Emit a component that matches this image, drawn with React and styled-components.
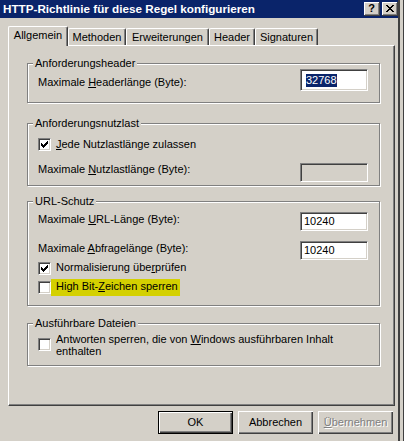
import React from "react"
import styled, { createGlobalStyle } from "styled-components"

const GlobalStyle = createGlobalStyle`
  html, body {
    margin: 0;
    padding: 0;
    background: #d4d0c8;
  }
  body {
    font-family: "Liberation Sans", Arial, sans-serif;
    font-size: 11px;
    color: #000;
  }
  * {
    box-sizing: border-box;
  }
`

const Screen = styled.div`
  display: flex;
  width: 404px;
  height: 441px;
  overflow: hidden;
`

const Window = styled.div`
  width: 400px;
  height: 441px;
  flex: none;
  display: flex;
  flex-direction: column;
  background: #d4d0c8;
  border-right: 2px solid #404040;
`

const Backdrop = styled.div`
  flex: 1;
  background: #d4d0c8;
  border-right: 1px solid #404040;
`

const TitleBar = styled.div`
  height: 18px;
  flex: none;
  display: flex;
  align-items: flex-start;
  background: #0a246a;
  padding: 0 0 0 3px;
`

const Title = styled.div`
  flex: 1;
  color: #fff;
  font-weight: bold;
  font-size: 11.7px;
  line-height: 18px;
  white-space: nowrap;
`

const CaptionButtons = styled.div`
  display: flex;
  gap: 2px;
  margin-top: 2px;
`

const CaptionButton = styled.div`
  width: 16px;
  height: 14px;
  background: #d4d0c8;
  box-shadow: inset -1px -1px #404040, inset 1px 1px #fff,
    inset -2px -2px #808080;
  display: flex;
  align-items: center;
  justify-content: center;
  font-weight: bold;
  font-size: 11px;
  line-height: 1;
  padding: 0 1px 1px 0;
`

const TabRow = styled.div`
  display: flex;
  align-items: flex-end;
  height: 19px;
  margin: 8px 0 0 8px;
  flex: none;
`

const Tab = styled.div`
  position: relative;
  z-index: ${p => (p.$active ? 1 : 0)};
  width: ${p => p.$w}px;
  height: ${p => (p.$active ? 20 : 17)}px;
  margin-bottom: ${p => (p.$active ? -1 : 0)}px;
  background: #d4d0c8;
  border-left: 1px solid #fff;
  border-top: 1px solid #fff;
  border-right: 1px solid #404040;
  box-shadow: inset -1px 0 #808080;
  border-radius: 2px 2px 0 0;
  padding-top: 2px;
  text-align: center;
  line-height: 13px;
  white-space: nowrap;
`

const Panel = styled.div`
  margin-left: 8px;
  width: 387px;
  height: 361px;
  flex: none;
  border-top: 1px solid #fff;
  border-left: 1px solid #fff;
  border-right: 1px solid #404040;
  border-bottom: 1px solid #404040;
  box-shadow: inset -1px -1px #808080;
  padding: 17px 14px 0 18px;
  display: flex;
  flex-direction: column;
`

const Group = styled.div`
  height: ${p => p.$h}px;
  margin-top: ${p => p.$mt || 0}px;
  flex: none;
  border: 1px solid #808080;
  box-shadow: inset 1px 1px #fff, 1px 1px #fff;
  padding: 0 11px 0 10px;
  display: flex;
  flex-direction: column;
`

const Legend = styled.div`
  align-self: flex-start;
  height: 13px;
  margin: -7px 0 -6px -5px;
  padding: 0 2px;
  background: #d4d0c8;
  line-height: 13px;
  white-space: nowrap;
`

const FieldRow = styled.div`
  display: flex;
  justify-content: space-between;
  align-items: flex-start;
  margin-top: ${p => p.$mt}px;
`

const CheckRow = styled.div`
  display: flex;
  align-items: flex-start;
  margin-top: ${p => p.$mt}px;
`

const Label = styled.div`
  margin-top: ${p => p.$dy || 0}px;
  line-height: ${p => p.$lh || 13}px;
  white-space: nowrap;
`

const CheckLabel = styled(Label)`
  margin-left: ${p => (p.$marked ? 0 : 5)}px;
  padding: ${p => (p.$marked ? "1px 2px 3px 5px" : "0")};
  background: ${p => (p.$marked ? "#d4d000" : "transparent")};
`

const TextBox = styled.div`
  width: 68px;
  height: ${p => p.$h}px;
  flex: none;
  background: ${p => (p.$disabled ? "#d4d0c8" : "#fff")};
  border: 1px solid;
  border-color: #808080 #fff #fff #808080;
  box-shadow: inset 1px 1px #404040, inset -1px -1px #d4d0c8;
  padding-left: 3px;
  display: flex;
  align-items: center;
  line-height: 13px;
`

const Selection = styled.span`
  margin-left: 2px;
  background: #0a246a;
  color: #fff;
  line-height: 13px;
`

const Box = styled.div`
  width: 13px;
  height: 13px;
  flex: none;
  margin-top: ${p => p.$dy || 0}px;
  background: #fff;
  border: 1px solid;
  border-color: #808080 #fff #fff #808080;
  box-shadow: inset 1px 1px #404040, inset -1px -1px #d4d0c8;

  svg {
    display: block;
  }
`

const ButtonRow = styled.div`
  display: flex;
  justify-content: flex-end;
  gap: 5px;
  margin-top: 5px;
  padding-right: 5px;
`

const Button = styled.div`
  width: 75px;
  height: 23px;
  display: flex;
  align-items: center;
  justify-content: center;
  background: #d4d0c8;
  border: ${p => (p.$default ? "1px solid #000" : "none")};
  box-shadow: inset 1px 1px #fff, inset -1px -1px #404040,
    inset -2px -2px #808080;
  color: ${p => (p.$disabled ? "#808080" : "#000")};
  text-shadow: ${p => (p.$disabled ? "1px 1px 0 #fff" : "none")};
  line-height: 13px;
`

const CheckBox = ({ checked, dy }) => (
  <Box $dy={dy}>
    {checked && (
      <svg width="11" height="11" viewBox="0 0 11 11" shapeRendering="crispEdges">
        <path
          d="M2 4h1v3h-1z M3 5h1v3h-1z M4 6h1v3h-1z M5 5h1v3h-1z M6 4h1v3h-1z M7 3h1v3h-1z M8 2h1v3h-1z"
          fill="#000"
        />
      </svg>
    )}
  </Box>
)

const CloseGlyph = () => (
  <svg width="8" height="7" viewBox="0 0 8 7" shapeRendering="crispEdges">
    <path
      d="M0 0h2v1h-2z M1 1h2v1h-2z M2 2h4v1h-4z M3 3h2v1h-2z M2 4h4v1h-4z M1 5h2v1h-2z M0 6h2v1h-2z M6 0h2v1h-2z M5 1h2v1h-2z M5 5h2v1h-2z M6 6h2v1h-2z"
      fill="#000"
    />
  </svg>
)

const tabs = [
  { label: "Allgemein", w: 60, active: true },
  { label: "Methoden", w: 58 },
  { label: "Erweiterungen", w: 83 },
  { label: "Header", w: 46 },
  { label: "Signaturen", w: 63 },
]

export default function App() {
  return (
    <>
      <GlobalStyle />
      <Screen>
        <Window>
          <TitleBar>
            <Title>HTTP-Richtlinie für diese Regel konfigurieren</Title>
            <CaptionButtons>
              <CaptionButton>?</CaptionButton>
              <CaptionButton>
                <CloseGlyph />
              </CaptionButton>
            </CaptionButtons>
          </TitleBar>

          <TabRow>
            {tabs.map(t => (
              <Tab key={t.label} $w={t.w} $active={t.active}>
                {t.label}
              </Tab>
            ))}
          </TabRow>

          <Panel>
            <Group $h={40}>
              <Legend>Anforderungsheader</Legend>
              <FieldRow $mt={5}>
                <Label $dy={7}>
                  Maximale <u>H</u>eaderlänge (Byte):
                </Label>
                <TextBox $h={22}>
                  <Selection>32768</Selection>
                </TextBox>
              </FieldRow>
            </Group>

            <Group $h={63} $mt={20}>
              <Legend>Anforderungsnutzlast</Legend>
              <CheckRow $mt={14}>
                <CheckBox checked />
                <CheckLabel>
                  <u>J</u>ede Nutzlastlänge zulassen
                </CheckLabel>
              </CheckRow>
              <FieldRow $mt={12}>
                <Label>
                  Maximale <u>N</u>utzlastlänge (Byte):
                </Label>
                <TextBox $h={19} $disabled />
              </FieldRow>
            </Group>

            <Group $h={105} $mt={15}>
              <Legend>URL-Schutz</Legend>
              <FieldRow $mt={10}>
                <Label $dy={1}>
                  Maximale <u>U</u>RL-Länge (Byte):
                </Label>
                <TextBox $h={19}>10240</TextBox>
              </FieldRow>
              <FieldRow $mt={10}>
                <Label $dy={1}>
                  Maximale <u>A</u>bfragelänge (Byte):
                </Label>
                <TextBox $h={19}>10240</TextBox>
              </FieldRow>
              <CheckRow $mt={2}>
                <CheckBox checked />
                <CheckLabel $dy={-1}>
                  Normalisierung übe<u>r</u>prüfen
                </CheckLabel>
              </CheckRow>
              <CheckRow $mt={6}>
                <CheckBox />
                <CheckLabel $dy={-2} $marked>
                  High Bit-<u>Z</u>eichen sperren
                </CheckLabel>
              </CheckRow>
            </Group>

            <Group $h={43} $mt={17}>
              <Legend>Ausführbare Dateien</Legend>
              <CheckRow $mt={9}>
                <CheckBox dy={5} />
                <CheckLabel $lh={12}>
                  Antworten sperren, die von <u>W</u>indows ausführbaren Inhalt
                  <br />
                  enthalten
                </CheckLabel>
              </CheckRow>
            </Group>
          </Panel>

          <ButtonRow>
            <Button $default>OK</Button>
            <Button>Abbrechen</Button>
            <Button $disabled>
              <span>
                <u>Ü</u>bernehmen
              </span>
            </Button>
          </ButtonRow>
        </Window>
        <Backdrop />
      </Screen>
    </>
  )
}
